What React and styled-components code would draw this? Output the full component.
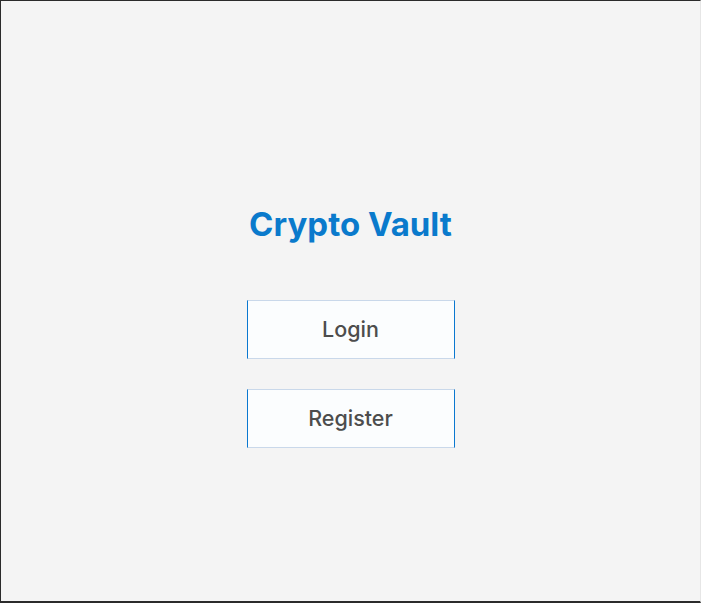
import React from 'react';
import styled, { createGlobalStyle } from 'styled-components';

const GlobalStyle = createGlobalStyle`
  html, body {
    margin: 0;
    padding: 0;
  }
  body {
    font-family: Inter, "Noto Sans", sans-serif;
    background: #f4f4f4;
  }
  * {
    box-sizing: border-box;
  }
`;

const Frame = styled.div`
  width: 701px;
  height: 603px;
  background: #f4f4f4;
  border-top: 1px solid #2b2b2b;
  border-left: 1px solid #2b2b2b;
  border-bottom: 2px solid #2b2b2b;
  border-right: 1px solid #e6e6e6;
  display: flex;
  flex-direction: column;
  align-items: center;
  padding-top: 203px;
`;

const Title = styled.h1`
  margin: 0 0 56px;
  font-size: 33px;
  font-weight: 700;
  color: #0a7acc;
  line-height: 40px;
`;

const Buttons = styled.div`
  display: flex;
  flex-direction: column;
  gap: 30px;
`;

const Button = styled.button`
  width: 208px;
  height: 59px;
  padding: 0 0 2px;
  background: #fbfdfe;
  border: 1px solid #c9d8ea;
  border-left-color: #0a78d0;
  border-right-color: #0a78d0;
  border-radius: 0;
  font-family: Inter, "Noto Sans", sans-serif;
  font-size: 21.5px;
  font-weight: 500;
  color: #4d4d4d;
  cursor: pointer;
`;

export default function App() {
  return (
    <>
      <GlobalStyle />
      <Frame>
        <Title>Crypto Vault</Title>
        <Buttons>
          <Button>Login</Button>
          <Button>Register</Button>
        </Buttons>
      </Frame>
    </>
  );
}
